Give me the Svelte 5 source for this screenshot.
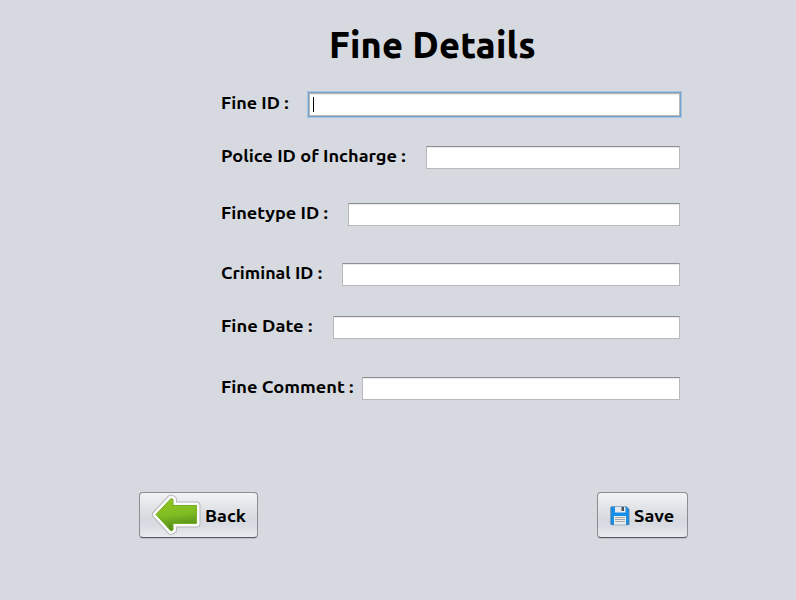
<script>
  // Each row: label, distance from the previous row, field offset and text stretch.
  const rows = [
    { id: 'fine', label: 'Fine ID :', gap: 0, offset: 88, stretch: 1.06 },
    { id: 'police', label: 'Police ID of Incharge :', gap: 30, offset: 205, stretch: 1.07 },
    { id: 'type', label: 'Finetype ID :', gap: 34, offset: 127, stretch: 1.068 },
    { id: 'criminal', label: 'Criminal ID :', gap: 37, offset: 121, stretch: 1.052 },
    { id: 'date', label: 'Fine Date :', gap: 30, offset: 112, stretch: 1.08 },
    { id: 'comment', label: 'Fine Comment :', gap: 38, offset: 141, stretch: 1.073 }
  ];
  let active = $state('fine');
</script>

<main>
  <h1>Fine Details</h1>
  <form onsubmit={(e) => e.preventDefault()}>
    {#each rows as row}
      <div class="row" style="margin-top:{row.gap}px">
        <label for={row.id} style="width:{row.offset}px"><span class="wide" style="transform:scaleX({row.stretch})">{row.label}</span></label>
        <div class="field" class:active={active === row.id}>
          {#if active === row.id}<span class="caret"></span>{/if}
          <input id={row.id} onfocus={() => (active = row.id)} />
        </div>
      </div>
    {/each}
  </form>
  <footer>
    <button class="back">
      <svg width="50" height="42" viewBox="0 0 50 42">
        <defs>
          <linearGradient id="leaf" x1="0" y1="0" x2="0.15" y2="1">
            <stop offset="0" stop-color="#8fc51f" />
            <stop offset="0.55" stop-color="#80bd22" />
            <stop offset="1" stop-color="#4f861b" />
          </linearGradient>
        </defs>
        <path d="M20 4.5 L5 20.5 L20 37 L22 36 V29.5 H45.5 V11.5 H22 V5.5 Z" fill="none" stroke="#b5b6b8" stroke-width="8" stroke-linejoin="round" />
        <path d="M20 4.5 L5 20.5 L20 37 L22 36 V29.5 H45.5 V11.5 H22 V5.5 Z" fill="none" stroke="#fafafa" stroke-width="6" stroke-linejoin="round" />
        <path d="M20 4.5 L5 20.5 L20 37 L22 36 V29.5 H45.5 V11.5 H22 V5.5 Z" fill="url(#leaf)" stroke="#78ad25" stroke-width="1" stroke-linejoin="round" />
      </svg>
      <span class="wide">Back</span>
    </button>
    <button class="save">
      <svg width="20" height="20" viewBox="0 0 20 20">
        <path d="M1.5 .8 H16.5 L19 3.3 V18.7 H1.5 Q.8 18.7 .8 18 V1.5 Q.8 .8 1.5 .8 Z" fill="#168fe8" stroke="#477a9f" stroke-width=".8" />
        <path d="M5 .8 H15.5 V6.5 H5 Z" fill="#e7e9ea" />
        <path d="M11.5 1 H14 V5 H11.5 Z" fill="#4b5055" />
        <path d="M4 10 H16 V18.7 H4 Z" fill="#eceded" />
        <path d="M5 11.5 H15 M5 13.5 H15 M5 15.5 H15" stroke="#a3a5a7" stroke-width="1" />
      </svg>
      <span class="wide">Save</span>
    </button>
  </footer>
</main>

<style>
  :global(body) { background: #d6d9df; }
  main {
    box-sizing: border-box;
    width: 796px;
    height: 600px;
    overflow: hidden;
    background: #d6d9df;
    color: #000;
    font-family: Ubuntu, "Noto Sans", sans-serif;
    font-weight: 700;
  }
  h1 {
    margin: 0 0 0 329px;
    padding-top: 21px;
    height: 72px;
    box-sizing: border-box;
    font-size: 36px;
    font-weight: 800;
    letter-spacing: 0.25px;
    line-height: 48px;
    white-space: nowrap;
  }
  form { margin-top: 21px; padding-left: 221px; height: 399px; box-sizing: border-box; }
  .row { display: flex; width: 459px; height: 23px; }
  label { flex: none; font-size: 17px; line-height: 20px; white-space: nowrap; }
  .wide { display: inline-block; transform-origin: 0 50%; transform: scaleX(1.07); }
  .field {
    flex: 1;
    display: flex;
    align-items: center;
    box-sizing: border-box;
    border: 1px solid #b8b9bb;
    border-top-color: #8e8f92;
    background: #fff;
    box-shadow: inset 0 1px #e9e9ea;
  }
  .active {
    border-color: #b9b7b4;
    box-shadow: 0 0 0 1px #73a4d1, 0 0 0 2px #a7c3de, inset 0 1px #e9e9ea;
  }
  .caret { width: 1px; height: 15px; margin-left: 3px; background: #000; }
  input { min-width: 0; flex: 1; border: 0; padding: 0 5px; outline: none; background: transparent; height: 18px; }
  footer { display: flex; justify-content: space-between; width: 549px; margin-left: 139px; }
  button {
    display: flex;
    align-items: center;
    box-sizing: border-box;
    height: 46px;
    padding: 0;
    border: 1px solid #8b8d91;
    border-bottom-color: #55585d;
    border-radius: 4px;
    background: linear-gradient(#f3f3f6 0%, #e3e5e9 30%, #d6d9df 60%, #d9dce2 75%, #e9ebf0 100%);
    box-shadow: 0 1px #bfc2c8;
    color: #000;
    font: 700 17px/22px Ubuntu, "Noto Sans", sans-serif;
  }
  button .wide { padding-top: 1px; }
  svg { flex: none; }
  .back { width: 119px; padding-left: 11px; }
  .back span { margin-left: 4px; }
  .save { width: 91px; padding-left: 12px; }
  .save svg { margin-top: 1px; }
  .save span { margin-left: 4px; }
</style>
